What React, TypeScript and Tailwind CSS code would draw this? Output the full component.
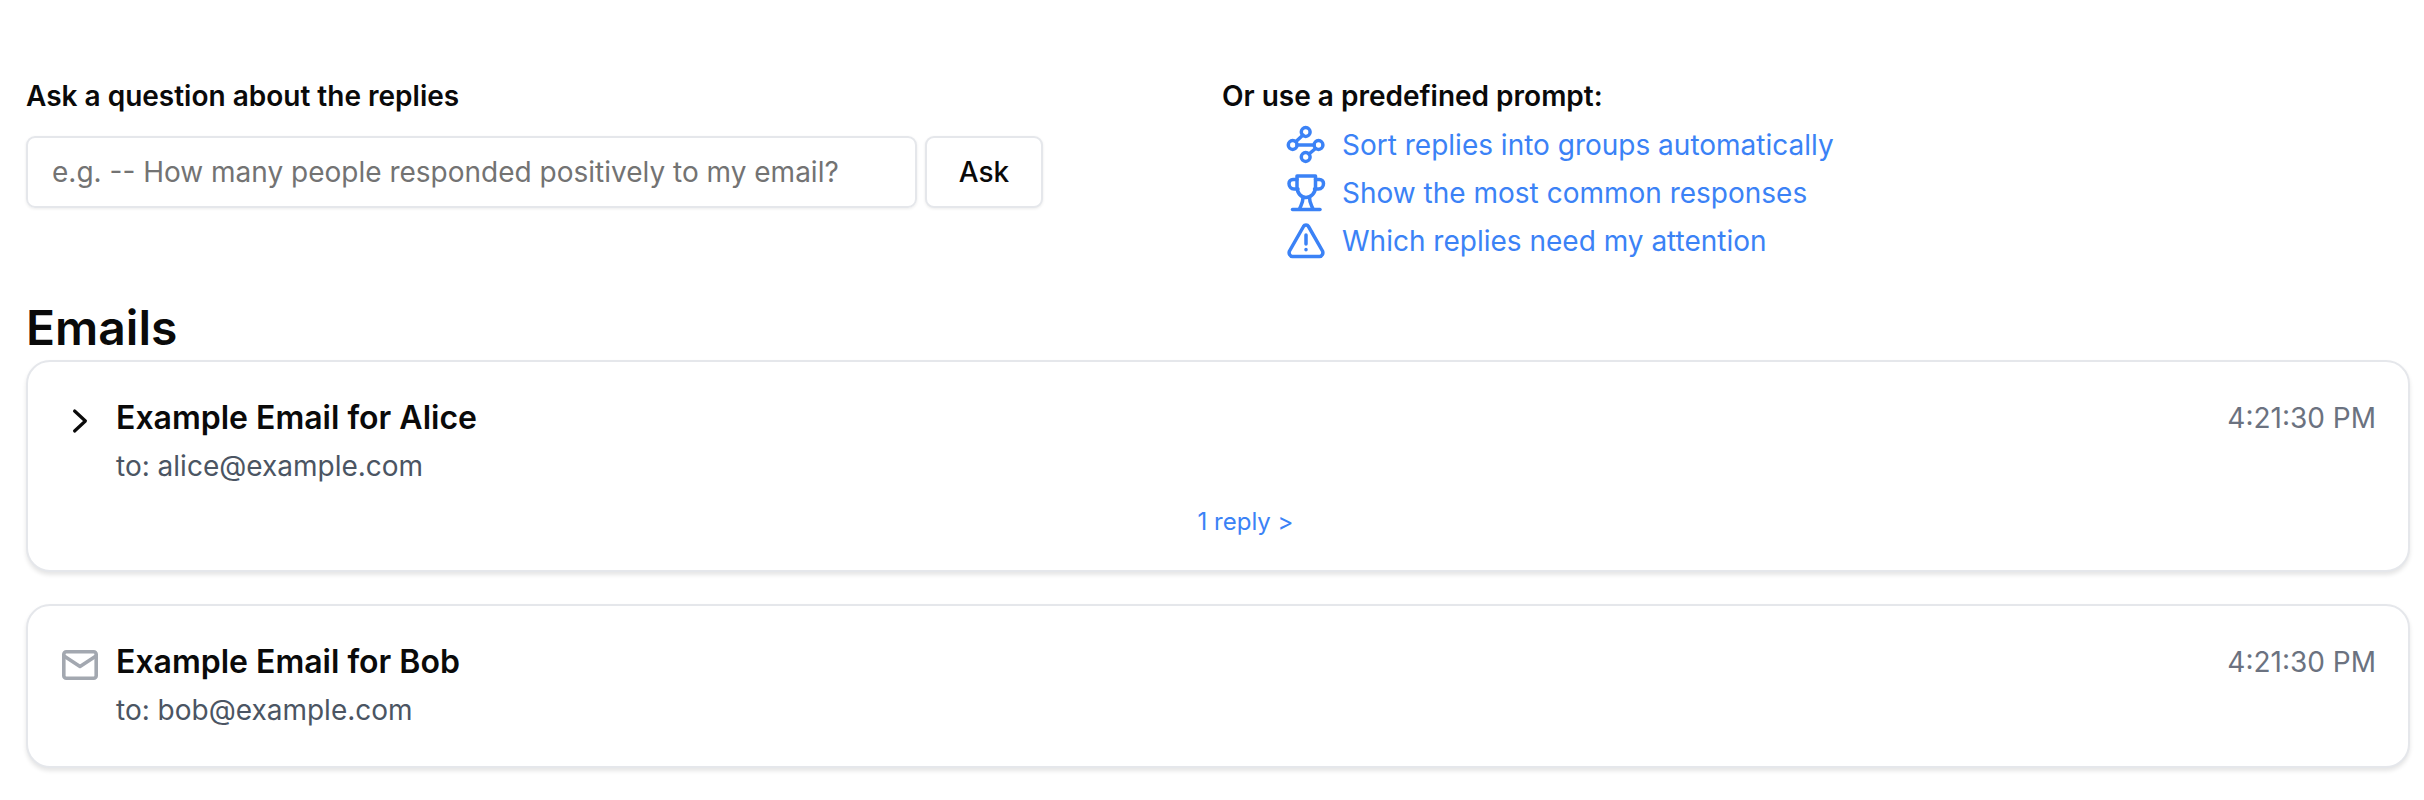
export default function App() {
  const iconCls = "w-[38px] h-[38px] shrink-0 text-[#3b82f6] overflow-visible";
  const Flow = () => (
    <svg className={iconCls} viewBox="0 0 38 38" fill="none" stroke="currentColor" strokeWidth="3.5" strokeLinecap="round" strokeLinejoin="round">
      <circle cx="18.7" cy="6" r="4.4" />
      <circle cx="5.7" cy="19" r="4.4" />
      <circle cx="31.5" cy="19" r="4.4" />
      <circle cx="18.7" cy="31" r="4.4" />
      <path d="M16 9 L9 15.5 M10 19 H27 M22 28 L28.5 22.5" />
    </svg>
  );
  const Trophy = () => (
    <svg className={iconCls} viewBox="0 0 38 38" fill="none" stroke="currentColor" strokeWidth="3.5" strokeLinecap="round" strokeLinejoin="round">
      <path d="M10 2 H28.5 V13 C28.5 19 24 23.5 19 23.5 C14 23.5 10 19 10 13 Z" />
      <path d="M10 5.5 H6 C3.5 5.5 2 7.5 2 9.5 C2 12.5 4 15 7 15 H11 M28.5 5.5 H32.5 C35 5.5 36.5 7.5 36.5 9.5 C36.5 12.5 34.5 15 31.5 15 H27.5" />
      <path d="M16 23.5 C16 29 14 31 12.5 35 M22.5 23.5 C22.5 29 24.5 31 26 35" />
      <path d="M5.5 35.5 H33" />
    </svg>
  );
  const Warn = () => (
    <svg className={iconCls} viewBox="0 0 38 38" fill="none" stroke="currentColor" strokeWidth="3.5" strokeLinecap="round" strokeLinejoin="round">
      <path d="M16.5 4.5 C17.6 2.6 20.4 2.6 21.5 4.5 L35.5 29 C36.6 31.5 35 34.5 32.5 34.5 H5.5 C3 34.5 1.4 31.5 2.5 29 Z" />
      <path d="M19 13 V22 M19 27.5 V27.7" />
    </svg>
  );
  const Prompt = ({ icon, text }: { icon: React.ReactNode; text: string }) => (
    <a className="flex items-center gap-[17px] h-[48px] text-[#3b82f6] text-[28px]">
      {icon}
      <span>{text}</span>
    </a>
  );
  const Card = ({ icon, title, to, reply }: { icon: React.ReactNode; title: string; to: string; reply?: boolean }) => (
    <div className="rounded-[24px] border-2 border-[#e5e7eb] bg-white shadow-[0_3px_4px_rgba(0,0,0,0.1)] pl-[31px] pr-[32px] pt-[37px] pb-[38px]">
      <div className="flex">
        <div className="w-[42px] h-[42px] mr-[15px] mt-[1px] flex items-center justify-center shrink-0">{icon}</div>
        <div className="flex-1">
          <div className="text-[32px] leading-[38px] font-semibold text-[#0a0a0a]">{title}</div>
          <div className="text-[28px] leading-[36px] text-[#4b5563] mt-[11px]">{to}</div>
        </div>
        <div className="text-[28px] leading-[38px] text-[#6b7280]">4:21:30 PM</div>
      </div>
      {reply && (
        <div className="text-center text-[24px] leading-[30px] text-[#3b82f6] mt-[23px] mb-[-5px] pl-[56px]">1 reply &gt;</div>
      )}
    </div>
  );
  return (
    <div className="bg-white min-h-[800px] pl-[26px] pt-[77px] font-['Inter',sans-serif]">
      <div className="flex">
        <div className="w-[1196px] shrink-0">
          <div className="text-[28px] leading-[38px] font-semibold text-[#0a0a0a]">Ask a question about the replies</div>
          <div className="flex gap-[8px] mt-[21px]">
            <input
              readOnly
              placeholder="e.g. -- How many people responded positively to my email?"
              className="w-[891px] h-[72px] rounded-[9px] border-2 border-[#e5e7eb] px-[24px] text-[28px] text-[#0a0a0a] placeholder:text-[#737373] shadow-[0_1px_3px_rgba(0,0,0,0.08)] outline-none"
            />
            <button className="w-[118px] h-[72px] rounded-[9px] border-2 border-[#e5e7eb] bg-white text-[28px] font-medium text-[#0a0a0a] shadow-[0_1px_3px_rgba(0,0,0,0.08)]">Ask</button>
          </div>
        </div>
        <div>
          <div className="text-[28px] leading-[38px] font-semibold text-[#0a0a0a]">Or use a predefined prompt:</div>
          <div className="pl-[65px] mt-[6px]">
            <Prompt icon={<Flow />} text="Sort replies into groups automatically" />
            <Prompt icon={<Trophy />} text="Show the most common responses" />
            <Prompt icon={<Warn />} text="Which replies need my attention" />
          </div>
        </div>
      </div>
      <h2 className="text-[48px] leading-[56px] font-semibold text-[#0a0a0a] mt-[35px]">Emails</h2>
      <div className="flex flex-col gap-[32px] w-[2384px] mt-[4px]">
        <Card
          reply
          title="Example Email for Alice"
          to="to: alice@example.com"
          icon={
            <svg className="w-[18px] h-[26px] text-[#0a0a0a]" viewBox="0 0 18 26" fill="none" stroke="currentColor" strokeWidth="3.2" strokeLinecap="round" strokeLinejoin="round">
              <path d="M3.6 3 L14.4 13 L3.6 23" />
            </svg>
          }
        />
        <Card
          title="Example Email for Bob"
          to="to: bob@example.com"
          icon={
            <svg className="w-[36px] h-[30px] text-[#a3a8b0]" viewBox="0 0 36 30" fill="none" stroke="currentColor" strokeWidth="3.6" strokeLinecap="round" strokeLinejoin="round">
              <rect x="1.8" y="1.8" width="32.4" height="26.4" rx="2.5" />
              <path d="M2 6 L18 16.5 L34 6" />
            </svg>
          }
        />
      </div>
    </div>
  );
}
